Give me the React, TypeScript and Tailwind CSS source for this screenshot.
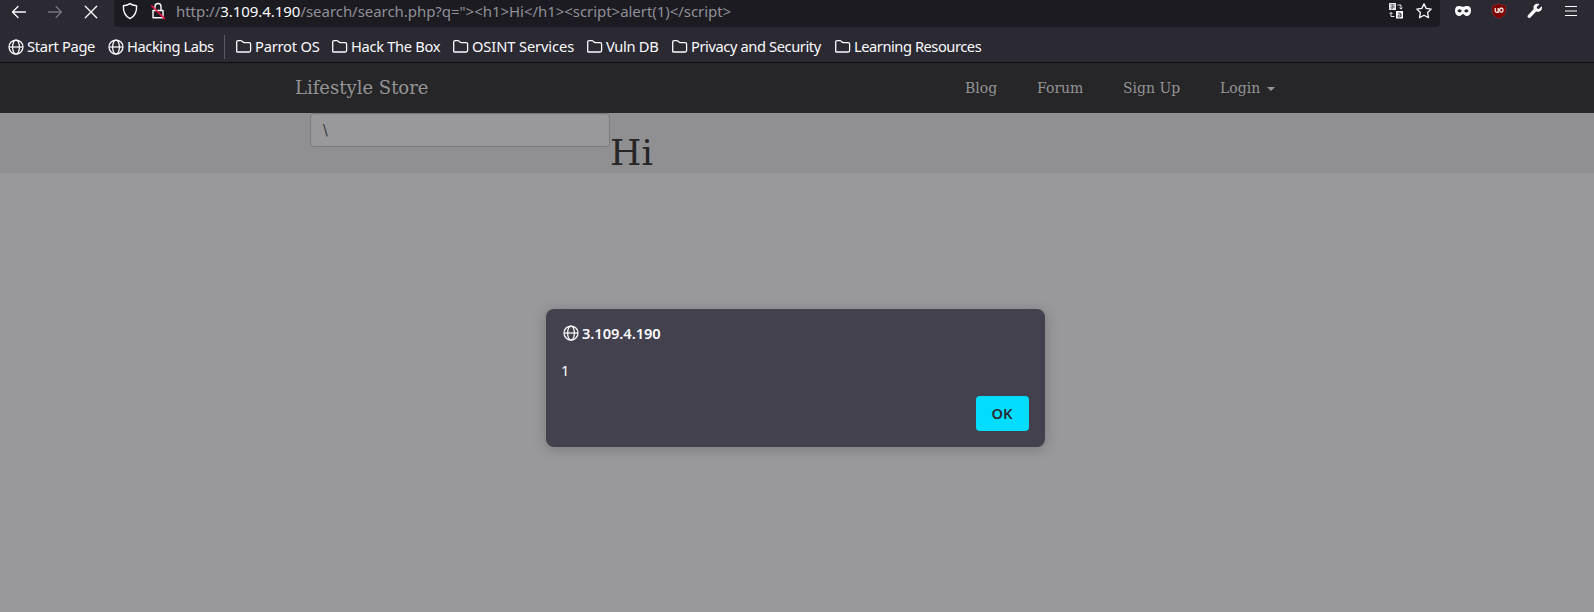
import React from 'react';

const Globe = () => (
  <svg viewBox="0 0 16 16" className="h-4 w-4 shrink-0" fill="none" stroke="#fbfbfe" strokeWidth="1.25">
    <circle cx="8" cy="8" r="7" />
    <ellipse cx="8" cy="8" rx="3.4" ry="7" />
    <path d="M1 8h14" />
  </svg>
);

const Folder = () => (
  <svg viewBox="0 0 16 16" className="h-4 w-4 shrink-0" fill="none" stroke="#fbfbfe" strokeWidth="1.3" strokeLinejoin="round">
    <path d="M.7 12.4V3Q.7 1.6 2.1 1.6H5.1Q5.7 1.6 6.1 2.1L7.2 3.2Q7.5 3.6 8.1 3.6H13.2Q14.6 3.6 14.6 5V11.6Q14.6 13 13.2 13H1.7Q.7 13 .7 12.4Z" />
  </svg>
);

const Bookmark = ({ icon, label, layout }: { icon: 'globe' | 'folder'; label: string; layout: string }) => (
  <div className={`flex h-6 shrink-0 items-center gap-[3px] whitespace-nowrap ${layout}`}>
    {icon === 'globe' ? <Globe /> : <Folder />}
    <span className="pb-0.5">{label}</span>
  </div>
);

const Toolbar = () => (
  <div className="flex h-[27px] items-start">
    <div className="flex w-[114px] shrink-0 pl-[11px] pt-1">
      <svg viewBox="0 0 16 16" className="mr-5 h-4 w-4" fill="none" stroke="#fbfbfe" strokeWidth="1.3" strokeLinecap="round" strokeLinejoin="round">
        <path d="M14.5 8H1.5M7 2.5L1.5 8L7 13.5" />
      </svg>
      <svg viewBox="0 0 16 16" className="mr-5 h-4 w-4" fill="none" stroke="#77767e" strokeWidth="1.3" strokeLinecap="round" strokeLinejoin="round">
        <path d="M1.5 8H14.5M9 2.5L14.5 8L9 13.5" />
      </svg>
      <svg viewBox="0 0 16 16" className="h-4 w-4" fill="none" stroke="#fbfbfe" strokeWidth="1.3" strokeLinecap="round">
        <path d="M2.3 2.3L13.7 13.7M13.7 2.3L2.3 13.7" />
      </svg>
    </div>
    <div className="flex h-[27px] w-[1326px] shrink-0 rounded-b bg-[#1c1b22] pl-2">
      <svg viewBox="0 0 16 18" className="mt-0.5 h-[18px] w-4 shrink-0" fill="none" stroke="#fbfbfe" strokeWidth="1.4" strokeLinejoin="round">
        <path d="M8 1.6C6.4 3 4.1 3.6 1.4 3.8C1.1 9.4 3 14.2 8 16.6C13 14.2 14.9 9.4 14.6 3.8C11.9 3.6 9.6 3 8 1.6Z" />
      </svg>
      <svg viewBox="0 0 16 18" className="ml-3 mt-0.5 h-[18px] w-4 shrink-0" fill="none" strokeWidth="1.4">
        <path d="M5 8V4.5a3 3 0 0 1 6 0V8M3 8.5H13V15.8H3Z" stroke="#fbfbfe" strokeLinejoin="round" />
        <path d="M1.2 3.3L14.8 16.9" stroke="#e8133f" strokeWidth="1.5" />
      </svg>
      <div className="ml-[10px] w-[1210px] whitespace-nowrap text-[15px] leading-[22px] tracking-[-0.045px] text-[#8f8f96]">
        http://<span className="text-[#fbfbfe]">3.109.4.190</span>{'/search/search.php?q="><h1>Hi</h1><script>alert(1)</script>'}
      </div>
      <svg viewBox="0 0 16 17" className="ml-0.5 mt-[3px] h-[17px] w-4 shrink-0">
        <path d="M1 0h7v7H1z" fill="#e6e6ea" />
        <path d="M2.2 1.900h4.600M4.300 1v4.500M2.400 5.200C3 3.500 5.500 3 6.600 4.400M6 3.400C5.400 5 4 6 3 6" stroke="#1c1b22" strokeWidth=".5" fill="none" />
        <path d="M8 8h7v7.500H8z" fill="#fbfbfe" />
        <path d="M10 10.300q3-1 3 .8v2.700M13 12c-2-.2-3 .3-3 1.100 0 1.300 2.200 1.200 3 0" stroke="#1c1b22" strokeWidth=".9" fill="none" />
        <path d="M9.500 2H13V6M11.500 4.600L13 6.200L14.500 4.600M6.500 13.500H3V9.500M1.500 11L3 9.400L4.500 11" stroke="#e4e4e8" strokeWidth="1" fill="none" />
      </svg>
      <svg viewBox="0 0 16 16" className="ml-3 mt-[3px] h-4 w-4 shrink-0" fill="none" stroke="#fbfbfe" strokeWidth="1.3" strokeLinejoin="round">
        <path d="M8 .9L10.200 5.400L15.200 6.100L11.600 9.500L12.500 14.700L8 12.200L3.500 14.700L4.400 9.500L.8 6.100L5.800 5.400Z" />
      </svg>
    </div>
    <svg viewBox="0 0 16 10" className="ml-[15px] mt-1.5 h-[10px] w-4 shrink-0">
      <path fillRule="evenodd" fill="#fbfbfe" d="M4 0C6 0 7 .8 8 .8S10 0 12 0C15 0 16 2 16 4.500C16 7.800 14 10 11.800 10C9.800 10 9 8 8 8S6.200 10 4.200 10C2 10 0 7.800 0 4.500C0 2 1 0 4 0ZM4.600 3.300C3.200 3.300 2.500 4.400 2.500 5C3 6 3.800 6.400 4.700 6.400C5.800 6.400 6.500 5.600 6.700 5C6.500 4 5.600 3.300 4.600 3.300ZM11.400 3.300C10.400 3.300 9.500 4 9.300 5C9.500 5.600 10.200 6.400 11.300 6.400C12.200 6.400 13 6 13.500 5C13.500 4.400 12.800 3.300 11.400 3.300Z" />
    </svg>
    <svg viewBox="0 0 16 16" className="ml-5 mt-[3px] h-4 w-4 shrink-0">
      <path d="M8 .2C6 1.600 3.600 2.200 1 2.300V7.500C1 12 4.500 14 8 15.800C11.500 14 15 12 15 7.500V2.300C12.400 2.200 10 1.600 8 .2Z" fill="#800000" stroke="#68515a" strokeWidth=".5" />
      <path d="M4.200 5V7.800Q4.200 9.300 5.900 9.300H7.200V5" stroke="#fff" strokeWidth="1.200" fill="none" />
      <rect x="8.700" y="5.200" width="3.300" height="4" rx="1.500" stroke="#fff" strokeWidth="1.200" fill="none" />
    </svg>
    <svg viewBox="0 0 16 16" className="ml-5 mt-[3px] h-4 w-4 shrink-0">
      <path d="M14.600 3.300L11.900 6L10 5.600L9.700 3.900L12.400 1.200C10.400.2 8.100.8 7 2.600C6.400 3.700 6.400 5 6.800 6.100L1 12.300C.3 13 .4 14 1.100 14.600C1.800 15.300 2.800 15.200 3.400 14.500L9.200 8.400C11.200 9.200 13.300 8.500 14.400 6.900C15.100 5.700 15.200 4.400 14.600 3.300Z" fill="#fbfbfe" />
    </svg>
    <svg viewBox="0 0 14 14" className="ml-[21px] mt-1 h-3.5 w-3.5 shrink-0" stroke="#fbfbfe" strokeWidth="1.200">
      <path d="M1 2.500h12M1 7h12M1 11.500h12" />
    </svg>
  </div>
);

export default function App() {
  return (
    <div className="relative h-[612px] w-[1594px] overflow-hidden bg-[#99999b]">
      <header className="h-[63px] border-b border-[#0f0f11] bg-[#2b2a33] font-['Noto_Sans',sans-serif] text-[14.67px] text-[#fbfbfe]">
        <Toolbar />
        <div className="flex h-[35px] items-center pl-2 pt-1">
          <Bookmark icon="globe" label="Start Page" layout="w-[100px] tracking-[-0.3px]" />
          <Bookmark icon="globe" label="Hacking Labs" layout="w-[116px] tracking-[-0.4px]" />
          <div className="mr-[11px] h-6 w-px shrink-0 bg-[#5b5a63]" />
          <Bookmark icon="folder" label="Parrot OS" layout="w-[96px] tracking-[-0.2px]" />
          <Bookmark icon="folder" label="Hack The Box" layout="w-[121px] tracking-[-0.3px]" />
          <Bookmark icon="folder" label="OSINT Services" layout="w-[134px] tracking-[-0.1px]" />
          <Bookmark icon="folder" label="Vuln DB" layout="w-[85px] tracking-[-0.3px]" />
          <Bookmark icon="folder" label="Privacy and Security" layout="w-[163px] tracking-[-0.4px]" />
          <Bookmark icon="folder" label="Learning Resources" layout="w-[160px] tracking-[-0.45px]" />
        </div>
      </header>
      <nav className="flex h-[50px] items-center bg-[#262628] pl-[295px] font-['DejaVu_Serif',serif] text-[14px] text-[#949496]">
        <span className="w-[670px] pb-0.5 text-[18px]">Lifestyle Store</span>
        <span className="w-[72px]">Blog</span>
        <span className="w-[86px]">Forum</span>
        <span className="w-[97px]">Sign Up</span>
        <span>Login</span>
        <span className="ml-[7px] mt-0.5 h-0 w-0 border-x-4 border-t-4 border-x-transparent border-t-[#949496]" />
      </nav>
      <main className="flex h-[60px] items-start bg-[#909092] pl-[310px] font-['DejaVu_Serif',serif]">
        <div className="flex h-[34px] w-[300px] items-center rounded border border-[#7a7a7c] bg-[#99999b] px-3 text-[14px] text-[#333336] shadow-[inset_0_1px_1px_rgba(0,0,0,0.06)]">\</div>
        <h1 className="mt-5 text-[36px] leading-[40px] text-[#262628]">Hi</h1>
      </main>
      <section className="absolute left-[546px] top-[309px] flex h-[138px] w-[499px] flex-col rounded-lg bg-[#42414d] px-4 pb-4 font-['Noto_Sans',sans-serif] text-[14.67px] text-[#fbfbfe] shadow-[0_2px_14px_rgba(0,0,0,0.22)]">
        <div className="mt-3 flex h-6 items-center gap-[3px] pl-px font-semibold tracking-[-0.05px]">
          <Globe />
          <span>3.109.4.190</span>
        </div>
        <p className="-ml-px mt-[13px] leading-6">1</p>
        <button className="mt-auto flex h-[35px] w-[53px] items-center justify-center self-end rounded bg-[#00ddff] pb-0.5 pr-px font-semibold text-[#2b2a33]">OK</button>
      </section>
    </div>
  );
}
